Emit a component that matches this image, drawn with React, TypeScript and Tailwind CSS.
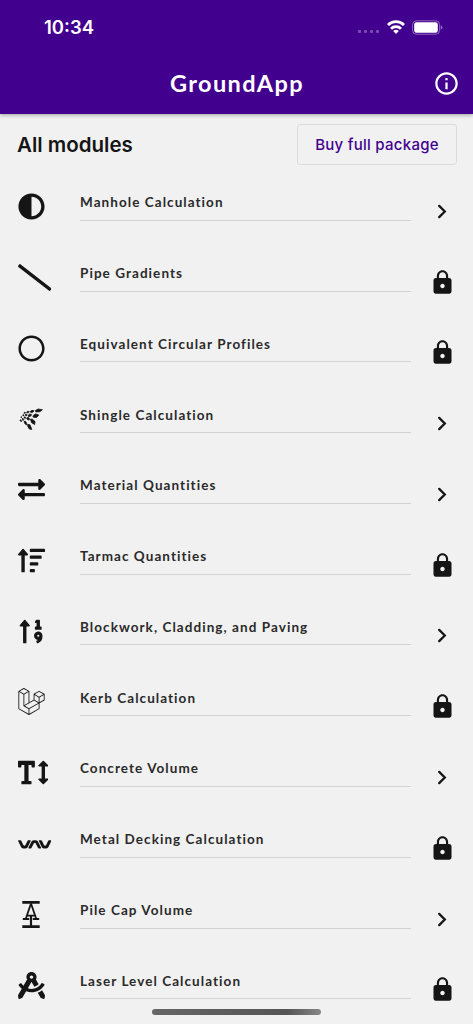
import type { ReactNode } from "react";
import {
  FaAdjust,
  FaDraftingCompass,
  FaExchangeAlt,
  FaLaravel,
  FaRegCircle,
  FaSlash,
  FaSortAmountUp,
  FaSortNumericUp,
  FaTextHeight,
  FaVnv,
} from "react-icons/fa";
import { MdInfoOutline, MdLock } from "react-icons/md";

interface Module {
  name: string;
  icon: ReactNode;
  locked?: boolean;
}

const iconClass = "size-[27px] shrink-0";

const modules: Module[] = [
  { name: "Manhole Calculation", icon: <FaAdjust className={iconClass} /> },
  { name: "Pipe Gradients", icon: <FaSlash className="h-[27px] w-[33.5px] shrink-0" />, locked: true },
  { name: "Equivalent Circular Profiles", icon: <FaRegCircle className={iconClass} />, locked: true },
  { name: "Shingle Calculation", icon: <ShingleIcon /> },
  { name: "Material Quantities", icon: <FaExchangeAlt className={iconClass} /> },
  { name: "Tarmac Quantities", icon: <FaSortAmountUp className={iconClass} />, locked: true },
  { name: "Blockwork, Cladding, and Paving", icon: <FaSortNumericUp className={iconClass} /> },
  { name: "Kerb Calculation", icon: <FaLaravel className={iconClass} />, locked: true },
  { name: "Concrete Volume", icon: <FaTextHeight className="h-[27px] w-[30.4px] shrink-0" /> },
  { name: "Metal Decking Calculation", icon: <FaVnv className="h-[27px] w-[33.5px] shrink-0" />, locked: true },
  { name: "Pile Cap Volume", icon: <PileIcon /> },
  { name: "Laser Level Calculation", icon: <FaDraftingCompass className={iconClass} />, locked: true },
];

export default function App() {
  return (
    <div className="relative h-[1024px] w-[473px] overflow-hidden bg-[#f1f1f1] font-['Inter',sans-serif] text-[#151515]">
      <header className="relative h-[114px] bg-[#42008f] text-white shadow-[0_1px_4px_rgba(0,0,0,0.35)]">
        <StatusBar />
        <div className="flex h-[60px] items-center justify-center">
          <h1 className="pl-px font-['Lato',sans-serif] text-[23.5px] font-bold leading-none tracking-[1.35px]">
            GroundApp
          </h1>
          <MdInfoOutline className="absolute right-[13px] size-[27px] -translate-y-px" />
        </div>
      </header>

      <div className="flex h-[62px] items-center justify-between pl-[17px] pr-4">
        <h2 className="text-[20.5px] font-semibold leading-none">All modules</h2>
        <button className="-mt-px h-[41px] w-[160px] rounded-[3px] border border-[#dcdcdc] text-[15px] font-medium leading-none tracking-[0.27px] text-[#42008f]">
          Buy full package
        </button>
      </div>

      <ul>
        {modules.map((m) => (
          <ModuleRow key={m.name} module={m} />
        ))}
      </ul>

      <div className="absolute bottom-[9px] left-[152px] h-[6px] w-[169px] rounded-full bg-linear-to-r from-[#666] via-[#555] via-80% to-[#888]" />
    </div>
  );
}

function ModuleRow({ module }: { module: Module }) {
  return (
    <li className="flex h-[70.77px] pl-[17.5px] pr-[17.5px] pt-[9.9px]">
      <div className="mt-[7.2px] flex h-[27px] w-[62.5px] items-center">
        <div className="flex min-w-[27px] justify-center">{module.icon}</div>
      </div>
      <div className="h-[35px] w-[331px] border-b border-[#d3d3d3] pt-[8.4px] font-['Lato',sans-serif] text-[13.5px] font-bold leading-[16px] tracking-[1.06px] text-[#2a2a2a]">
        {module.name}
      </div>
      <div className="ml-auto mt-[12px] size-[27px]">
        {module.locked ? <MdLock className="size-[27px]" /> : <ChevronIcon />}
      </div>
    </li>
  );
}

function ChevronIcon() {
  return (
    <svg viewBox="0 0 27 27" className="size-[27px]" fill="none" stroke="currentColor" strokeWidth="2.3">
      <path d="m10.2 7.9 5.6 5.6-5.6 5.6" strokeLinecap="round" />
    </svg>
  );
}

function StatusBar() {
  return (
    <div className="flex h-[54px] items-center justify-between pl-[44px] pr-[30px]">
      <span className="text-[18.5px] font-semibold leading-none">10:34</span>
      <div className="flex items-center">
        <div className="mr-[8px] mt-[9px] flex gap-[3px]">
          <i className="size-[3px] rounded-[1px] bg-white/30" />
          <i className="size-[3px] rounded-[1px] bg-white/30" />
          <i className="size-[3px] rounded-[1px] bg-white/30" />
          <i className="size-[3px] rounded-[1px] bg-white/30" />
        </div>
        <svg viewBox="0 0 18 14" className="mr-[7px] h-[14px] w-[18px]" fill="none" stroke="currentColor" strokeWidth="2.8">
          <path d="M1 5a11.4 11.4 0 0 1 16 0" />
          <path d="M4 8.7a7.1 7.1 0 0 1 10 0" />
          <path d="M9 13.9 6.2 11.1a4 4 0 0 1 5.6 0Z" fill="currentColor" stroke="none" />
        </svg>
        <svg viewBox="0 0 31 15" className="h-[15px] w-[31px]">
          <rect x="0.6" y="0.8" width="27" height="13.4" rx="3.8" fill="none" stroke="white" strokeOpacity="0.4" />
          <rect x="2.2" y="2.3" width="23.6" height="10.4" rx="2.2" fill="white" />
          <path d="M28.8 5.2q1.6.7 1.6 2.3t-1.6 2.3Z" fill="white" fillOpacity="0.45" />
        </svg>
      </div>
    </div>
  );
}

function ShingleIcon() {
  return (
    <svg
      viewBox="0 -1 27 27"
      className="size-[27px]"
      fill="currentColor"
      stroke="currentColor"
      strokeWidth="0.8"
      strokeLinejoin="round"
    >
      <path d="m17.4 4.6 2.7-1.6 4.3.7-2.5 2-4 .2Z" />
      <path d="m12.2 5.6 1.8-1.3 2.1.5-1.4 1.5-2 .1Z" />
      <path d="m8.6 6.2 1.3-1 1.4.5-1 1-1.3.1Z" />
      <path d="m5.8 7 .9-.8 1 .5-.9.9Z" />
      <path d="m14.9 9.9 2.4-2 3.5 1.1-2.2 2.5-3.3-.3Z" />
      <path d="m10.1 9.4 1.7-1.5 1.9.8-1.5 1.8-1.8-.1Z" />
      <path d="m7.1 9.1 1.1-1 1 .6-.9 1.2Z" />
      <path d="m4.6 9.3.8-.7.7.4-.6.9Z" />
      <path d="m12.4 13.4 1.7-.4 3 2.6-.5 2.9-2.9-1.7Z" />
      <path d="m8.7 12.2 1.3-1 1.6 1.5-.6 1.4-1.6-.6Z" />
      <path d="m5.9 11.4.9-.7 1.1.9-.7 1Z" />
      <path d="m9.5 18.4 2.5.4 1.8 4.6-2.5-.4-1.5-2.6Z" />
      <path d="m6 15.6 1.2-.6 1.4 1.9-.1 2-1.6-1.2Z" />
      <path d="m4.1 12.9.9-.6.8 1.4-.7.8Z" />
      <path d="m1.9 14.2.9-.5.9 1.5-.7.5Z" />
      <path d="m2.8 11 .6-.5.5.6-.6.7Z" />
    </svg>
  );
}

function PileIcon() {
  return (
    <svg viewBox="0 0 18 27" className="h-[27px] w-[18px]" fill="none" stroke="currentColor">
      <path d="M0.3 1.4h17.4M0.3 25.6h17.4" strokeWidth="2.6" />
      <path d="M9 2.5 3.7 18M9 2.5l5.3 15.5M5.4 14.6h7.2" strokeWidth="1.8" />
      <path d="M0.8 18h6.4M10.8 18h6.4" strokeWidth="1.8" />
      <path d="M9 14.5V25" strokeWidth="2.2" />
    </svg>
  );
}
